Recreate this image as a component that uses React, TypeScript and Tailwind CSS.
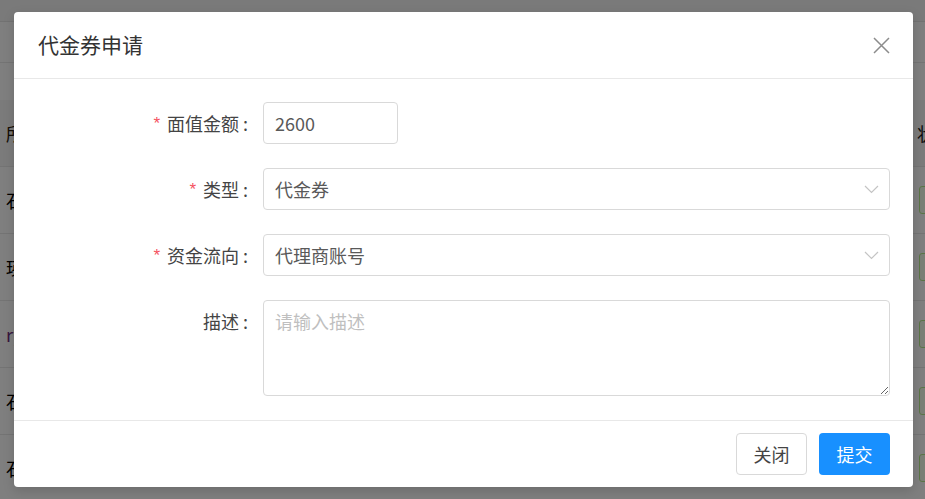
import React from "react";

const FONT = '"Noto Sans CJK SC", "Noto Sans", sans-serif';

function Chevron() {
  return (
    <svg width="15" height="9" viewBox="0 0 15 9" fill="none" className="shrink-0">
      <path d="M1 1 L7.5 7.5 L14 1" stroke="#c4c4c4" strokeWidth="1.2" />
    </svg>
  );
}

function CloseIcon() {
  return (
    <svg width="17" height="17" viewBox="0 0 17 17" fill="none">
      <path d="M1 1 L16 16 M16 1 L1 16" stroke="#8c8c8c" strokeWidth="1.5" />
    </svg>
  );
}

function Label({ text, required }: { text: string; required?: boolean }) {
  return (
    <div className="w-[215px] shrink-0 flex items-center justify-end h-[42px] text-[18px] text-[#444]">
      {required && (
        <span className="text-[#f5515f] text-[17px] mr-[5px] leading-none relative top-[1px]" style={{ fontFamily: "SimSun, 'Liberation Mono', monospace" }}>
          *
        </span>
      )}
      <span>{text}</span>
      <span className="ml-[4px] mr-[5px]">:</span>
    </div>
  );
}

export default function App() {
  const rows = [
    { y: "石", color: "#000" },
    { y: "瑛", color: "#000" },
    { y: "ry", color: "#6b2a7a" },
    { y: "石", color: "#000" },
    { y: "石", color: "#000" },
  ];
  return (
    <div className="relative w-[925px] h-[499px] overflow-hidden bg-white" style={{ fontFamily: FONT }}>
      {/* background page */}
      <div className="flex flex-col">
        <div className="h-[22px] bg-[#f4f4f4] border-b border-[#e4e4e4]" />
        <div className="h-[41px] border-b border-[#e8e8e8]" />
        <div className="h-[37px]" />
        <div className="h-[67px] bg-[#f7f7f7] border-b border-[#e8e8e8] flex items-center justify-between pl-[6px] pr-0 text-[18px]">
          <span className="text-[#2a1a0a]">所</span>
          <span className="text-[#1a1a1a] w-[8px] overflow-hidden whitespace-nowrap">状</span>
        </div>
        {rows.map((r, i) => (
          <div key={i} className="h-[67px] border-b border-[#e8e8e8] flex items-center justify-between pl-[6px] text-[18px]">
            <span style={{ color: r.color }}>{r.y}</span>
            <span className="w-[30px] h-[28px] border border-[#b7eb8f] bg-[#f6ffed] rounded-[3px] mr-[-24px]" />
          </div>
        ))}
      </div>

      {/* overlay */}
      <div className="absolute inset-0 bg-black/50" />

      {/* modal */}
      <div className="absolute left-[14px] top-[12px] w-[899px] h-[475px] bg-white rounded-[4px] shadow-[0_4px_12px_rgba(0,0,0,0.15)] flex flex-col">
        <div className="h-[67px] shrink-0 flex items-center justify-between pl-[24px] pr-[23px] border-b border-[#e8e8e8]">
          <span className="text-[21px] text-[#333]">代金券申请</span>
          <span className="flex items-center"><CloseIcon /></span>
        </div>

        <div className="flex-1 pl-[24px] pr-[23px] pt-[23px] flex flex-col gap-[24px]">
          <div className="flex items-start">
            <Label text="面值金额" required />
            <div className="ml-[10px] w-[135px] h-[42px] border border-[#d9d9d9] rounded-[4px] flex items-center px-[11px] text-[18px] text-[#595959]">
              2600
            </div>
          </div>
          <div className="flex items-start">
            <Label text="类型" required />
            <div className="ml-[10px] flex-1 h-[42px] border border-[#d9d9d9] rounded-[4px] flex items-center justify-between pl-[11px] pr-[10px] text-[18px] text-[#595959]">
              <span>代金券</span>
              <Chevron />
            </div>
          </div>
          <div className="flex items-start">
            <Label text="资金流向" required />
            <div className="ml-[10px] flex-1 h-[42px] border border-[#d9d9d9] rounded-[4px] flex items-center justify-between pl-[11px] pr-[10px] text-[18px] text-[#595959]">
              <span>代理商账号</span>
              <Chevron />
            </div>
          </div>
          <div className="flex items-start">
            <Label text="描述" />
            <textarea
              placeholder="请输入描述"
              className="ml-[10px] flex-1 h-[96px] border border-[#d9d9d9] rounded-[4px] px-[11px] py-[6px] text-[18px] leading-[28px] text-[#595959] placeholder:text-[#bfbfbf] outline-none"
              style={{ fontFamily: FONT, resize: "both" }}
            />
          </div>
        </div>

        <div className="h-[67px] shrink-0 border-t border-[#e8e8e8] flex items-center justify-end gap-[12px] px-[23px]">
          <button className="w-[71px] h-[42px] border border-[#d9d9d9] rounded-[4px] bg-white text-[18px] text-[#444]">关闭</button>
          <button className="w-[71px] h-[42px] rounded-[4px] bg-[#1890ff] text-[18px] text-white">提交</button>
        </div>
      </div>
    </div>
  );
}
